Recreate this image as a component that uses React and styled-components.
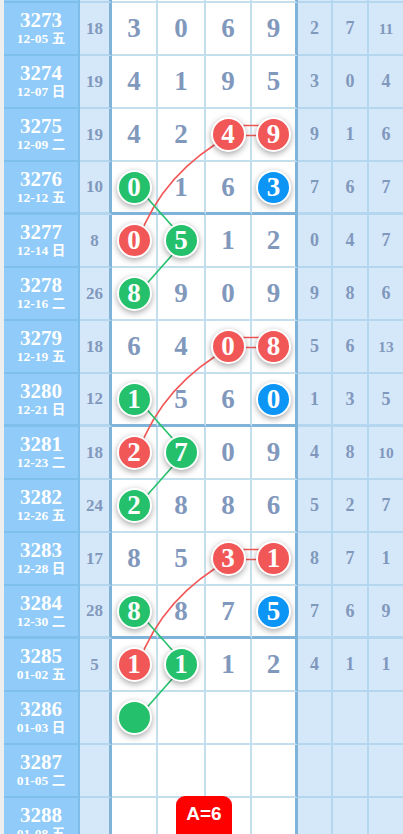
import styled, { createGlobalStyle } from "styled-components"

const GlobalStyle = createGlobalStyle`
    html, body {
        margin: 0;
        padding: 0;
        overflow: hidden;
        background: #ffffff;
    }
`

const RED = "#f25757"
const GREEN = "#25c06b"
const BLUE = "#0c95f4"
const INK = "#8198bd"

// digit cells: "4r" = red ball, "3g" = green, "5b" = blue, "g" = empty green ball
const rows = [
    { no: "3273", date: "12-05 五", cnt: "18", d: ["3", "0", "6", "9"], s: ["2", "7", "11"] },
    { no: "3274", date: "12-07 日", cnt: "19", d: ["4", "1", "9", "5"], s: ["3", "0", "4"] },
    { no: "3275", date: "12-09 二", cnt: "19", d: ["4", "2", "4r", "9r"], s: ["9", "1", "6"] },
    { no: "3276", date: "12-12 五", cnt: "10", d: ["0g", "1", "6", "3b"], s: ["7", "6", "7"] },
    { no: "3277", date: "12-14 日", cnt: "8", d: ["0r", "5g", "1", "2"], s: ["0", "4", "7"] },
    { no: "3278", date: "12-16 二", cnt: "26", d: ["8g", "9", "0", "9"], s: ["9", "8", "6"] },
    { no: "3279", date: "12-19 五", cnt: "18", d: ["6", "4", "0r", "8r"], s: ["5", "6", "13"] },
    { no: "3280", date: "12-21 日", cnt: "12", d: ["1g", "5", "6", "0b"], s: ["1", "3", "5"] },
    { no: "3281", date: "12-23 二", cnt: "18", d: ["2r", "7g", "0", "9"], s: ["4", "8", "10"] },
    { no: "3282", date: "12-26 五", cnt: "24", d: ["2g", "8", "8", "6"], s: ["5", "2", "7"] },
    { no: "3283", date: "12-28 日", cnt: "17", d: ["8", "5", "3r", "1r"], s: ["8", "7", "1"] },
    { no: "3284", date: "12-30 二", cnt: "28", d: ["8g", "8", "7", "5b"], s: ["7", "6", "9"] },
    { no: "3285", date: "01-02 五", cnt: "5", d: ["1r", "1g", "1", "2"], s: ["4", "1", "1"] },
    { no: "3286", date: "01-03 日", cnt: "", d: ["g", "", "", ""], s: ["", "", ""] },
    { no: "3287", date: "01-05 二", cnt: "", d: ["", "", "", ""], s: ["", "", ""] },
    { no: "3288", date: "01-08 五", cnt: "", d: ["", "", "", ""], s: ["", "", ""] },
]

const ROW_H = 53
const TOP = 3
const colX = [134, 181, 228, 273.5]
const cy = (r) => TOP + ROW_H * r + 25.5

const ballColor = { r: RED, g: GREEN, b: BLUE }

function Lines() {
    const groups = [2, 6, 10]
    return (
        <Overlay width="403" height={TOP + ROW_H * rows.length}>
            {groups.map((r) => {
                const y0 = cy(r)
                const x0 = colX[2]
                return (
                    <g key={r} fill="none" strokeWidth="1.6">
                        <line x1={x0} y1={y0 - 9} x2={colX[3]} y2={y0 - 9} stroke={RED} />
                        <line x1={x0} y1={y0 + 1} x2={colX[3]} y2={y0 + 1} stroke={RED} />
                        <path d={`M${x0} ${y0} Q${x0 - 69} ${y0 + 37} ${colX[0]} ${cy(r + 2)}`} stroke={RED} />
                        <line x1={colX[0]} y1={cy(r + 1)} x2={colX[1]} y2={cy(r + 2)} stroke={GREEN} />
                        <line x1={colX[1]} y1={cy(r + 2)} x2={colX[0]} y2={cy(r + 3)} stroke={GREEN} />
                    </g>
                )
            })}
        </Overlay>
    )
}

function DigitContent({ v }) {
    if (!v) return null
    const last = v[v.length - 1]
    if (ballColor[last]) {
        return <Ball $color={ballColor[last]}>{v.slice(0, -1)}</Ball>
    }
    return <Digit>{v}</Digit>
}

export default function App() {
    return (
        <>
            <GlobalStyle />
            <Page>
                <Table>
                    <Row $h={TOP}>
                        <IssueCell />
                        <CountCell />
                        <DigitCell />
                        <DigitCell />
                        <DigitCell />
                        <DigitCell $last />
                        <StatCell />
                        <StatCell />
                        <StatCell $last />
                    </Row>
                    {rows.map((row, i) => {
                        const thick = i % 4 === 3
                        return (
                            <Row key={row.no} $h={ROW_H} $thick={thick}>
                                <IssueCell>
                                    <IssueNo>{row.no}</IssueNo>
                                    <IssueDate>{row.date}</IssueDate>
                                </IssueCell>
                                <CountCell>{row.cnt}</CountCell>
                                {row.d.map((v, j) => (
                                    <DigitCell key={j} $last={j === 3}>
                                        <DigitContent v={v} />
                                    </DigitCell>
                                ))}
                                {row.s.map((v, j) => (
                                    <StatCell key={j} $last={j === 2} $small={v.length > 1}>{v}</StatCell>
                                ))}
                            </Row>
                        )
                    })}
                    <Lines />
                </Table>
                <Badge>A=6</Badge>
            </Page>
        </>
    )
}

const Page = styled.div`
    border-left: 4px solid #eceef0;
    font-family: "Liberation Serif", "Noto Sans CJK SC", serif;
`

const Table = styled.div`
    position: relative;
`

const Row = styled.div`
    display: grid;
    grid-template-columns: 76px 32px 46px 48px 46px 46px 35px 36px 34px;
    height: ${(p) => p.$h}px;

    & > * {
        border-bottom: ${(p) => (p.$thick ? "3px solid #7fb3d8" : "2px solid #c3dfee")};
    }
`

const Cell = styled.div`
    box-sizing: border-box;
    display: flex;
    align-items: center;
    justify-content: center;
    overflow: hidden;
`

const IssueCell = styled(Cell)`
    flex-direction: column;
    background: #90cbf9;
    border-right: 2px solid #7fbde9;
    color: #ffffff;
    font-weight: bold;
    && {
        border-bottom-color: #7fbfec;
    }
`

const IssueNo = styled.div`
    font-size: 21px;
    line-height: 20px;
`

const IssueDate = styled.div`
    font-size: 13.5px;
    line-height: 17px;
`

const CountCell = styled(Cell)`
    background: #d5e8f9;
    border-right: 3px solid #7fb3d8;
    color: ${INK};
    font-weight: bold;
    font-size: 17px;
    && {
        border-bottom-color: #b4d6ef;
    }
`

const DigitCell = styled(Cell)`
    background: #ffffff;
    border-right: ${(p) => (p.$last ? "3px solid #7fb3d8" : "2px solid #c3dfee")};
`

const StatCell = styled(Cell)`
    background: #d5e8f9;
    border-right: ${(p) => (p.$last ? "none" : "2px solid #b4d6ef")};
    color: ${INK};
    font-weight: bold;
    font-size: ${(p) => (p.$small ? "15.5px" : "18px")};
    && {
        border-bottom-color: #b4d6ef;
    }
`

const Digit = styled.span`
    color: ${INK};
    font-weight: bold;
    font-size: 27px;
`

const Ball = styled.span`
    position: relative;
    z-index: 2;
    box-sizing: border-box;
    width: 35px;
    height: 35px;
    border-radius: 50%;
    border: 2px solid #ffffff;
    background: ${(p) => p.$color};
    box-shadow: 0 2px 6px rgba(0, 0, 0, 0.35);
    display: flex;
    align-items: center;
    justify-content: center;
    color: #ffffff;
    font-weight: bold;
    font-size: 27px;
    line-height: 1;
`

const Overlay = styled.svg`
    position: absolute;
    top: 0;
    left: 0;
    z-index: 1;
    pointer-events: none;
`

const Badge = styled.div`
    position: fixed;
    left: 176px;
    bottom: 0;
    width: 56px;
    height: 38px;
    box-sizing: border-box;
    padding-top: 7px;
    background: #ff0000;
    border-radius: 9px 9px 0 0;
    color: #ffffff;
    font-family: "Liberation Sans", Arial, sans-serif;
    font-weight: bold;
    font-size: 19px;
    text-align: center;
    z-index: 5;
`
